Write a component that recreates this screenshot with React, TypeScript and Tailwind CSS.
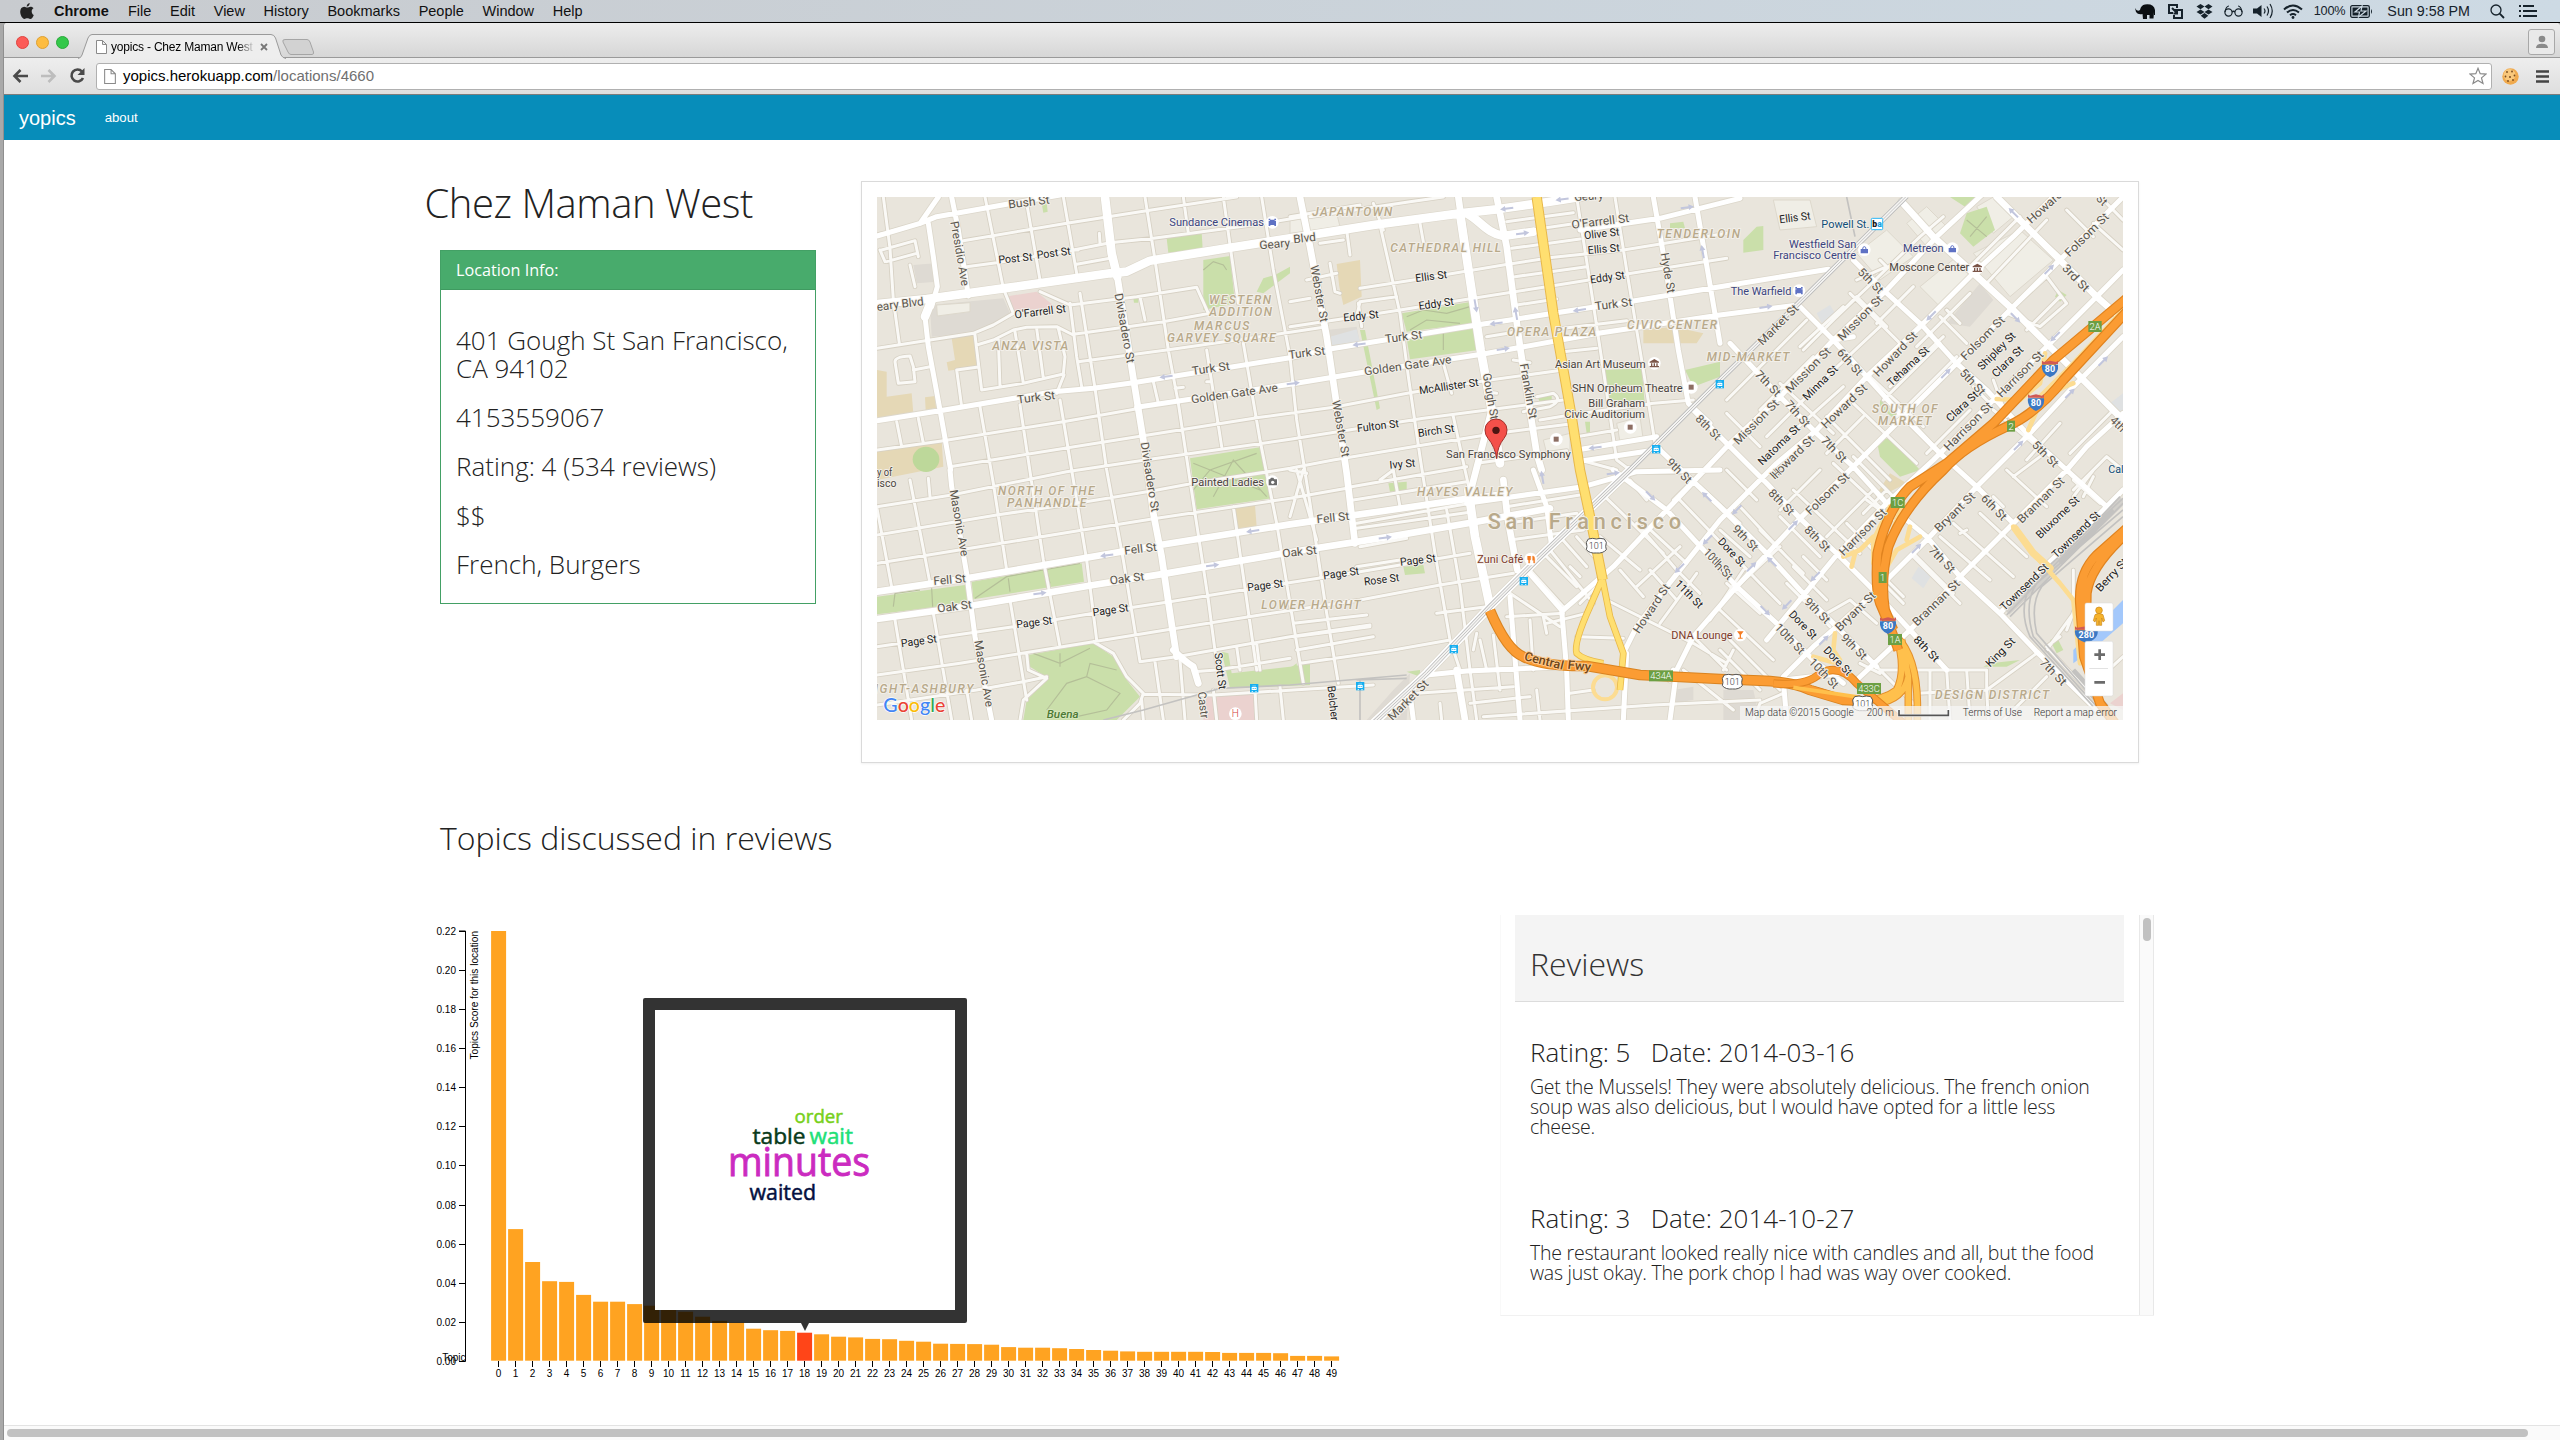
import React from "react";

/* ---------- Map data (units are one third of a pixel) ---------- */

const minorRoads: string[] = [
  // west, east-west streets
  "M310 212L620 160L860 122L1130 81",
  "M51 195L180 160M320 290L410 278L640 240L750 218L880 205L1200 162L1330 140",
  "M650 283L750 265M655 240L640 240M720 220L718 190",
  "M630 405L830 380L1010 352L1045 430",
  "M51 535L340 490L400 465L460 430",
  "M640 493L900 457L1050 430",
  "M655 575L920 540L1290 487L1400 470",
  "M350 525L400 510L460 480L500 472L590 470L640 495",
  "M365 660L490 640L610 612L615 560L595 475M590 670L612 615",
  "M345 495L365 660M415 510L420 650M465 485L490 640M530 475L550 625",
  "M160 600L210 590M290 600L350 592M290 600L305 710",
  "M105 575Q105 560 150 558L160 590L165 635L115 640Z",
  "M65 240L165 212L175 260M80 275L170 250M60 240L75 275",
  "M70 81L90 235L100 390L118 520M150 285L165 350",
  "M51 840L250 812L610 755L840 715",
  "M270 890L850 797L1200 742L1420 712L1650 668L1890 630L2110 600",
  "M51 1010L275 975L620 905L870 868L1290 808L1690 745L2110 690",
  "M51 1095L410 1035L650 1000L880 962L1000 940L1290 895L1420 870L1690 825L1910 790L2130 762",
  "M51 1180L330 1135L650 1083L890 1045L1290 985L1460 955",
  "M51 1430L220 1405L460 1370L700 1330L930 1295L1180 1255L1500 1205L1830 1150",
  "M51 1515L300 1480L700 1415L950 1375L1200 1335L1500 1290L1740 1245L1960 1210",
  "M51 1605L350 1560L490 1535L560 1520M840 1475L950 1460L1290 1400L1530 1365",
  "M1300 1360L1520 1335M1300 1400L1530 1370M1310 1440L1540 1400M1320 1480L1600 1440L1770 1410",
  "M700 1415L760 1450L800 1520L850 1570L840 1600L790 1650M850 1573L1060 1575L1540 1545",
  "M500 1450L505 1500L560 1525L490 1590L480 1650",
  "M1000 1505L1070 1500L1290 1465",
  // west, north-south streets
  "M375 81L430 355L460 430M500 100L540 330M610 81L650 310M660 370L690 560L705 655L740 900L790 1170L840 1475",
  "M630 400L650 560L665 650M540 365L630 405",
  "M855 81L885 270L925 540L955 700L1005 1030L1045 1290L1070 1480M970 81L985 190",
  "M1090 81L1115 260L1135 400M1040 540L1085 830M1120 1010L1190 1500",
  "M1150 520L1200 810L1250 1060L1295 1330L1330 1540",
  "M1205 81L1240 300L1290 560L1310 750L1350 1000L1400 1330L1435 1540",
  "M840 380L855 450M880 635L895 700M945 655L970 652M1040 635L1055 635",
  "M360 710L400 940L440 1200M450 1290L500 1590M480 705L550 1170L600 1430M600 690L680 1170L710 1410",
  "M110 755L125 830M175 745L190 820M50 1010L95 1250M150 930L210 1240M105 1350L155 1650M220 1330L275 1650",
  "M205 925L210 980M320 1560L335 1650M885 1475L910 1650M960 1470L975 1650M1060 1560L1070 1650M1130 1430L1140 1500M1190 1420L1200 1500M1185 1560L1190 1650M1260 1550L1270 1650M845 1590L850 1650",
  // centre
  "M1350 140L1650 95L1750 81M1290 140L1500 105M1560 165L1620 430L1645 620L1680 860L1725 1150L1770 1410L1800 1500",
  "M1340 330L1430 310M1410 280L1425 365L1440 370M1290 395L1350 385",
  "M1500 355L1660 330L1930 285L2080 262L2290 240L2600 190",
  "M1290 470L1490 440L1620 420L1840 385L2060 350L2300 312L2600 265",
  "M1490 440L1500 395L1610 380M1505 470L1495 400",
  "M1380 220L1450 210M1460 180L1470 255M1680 160L1690 215M1570 180L1540 100",
  "M1940 155L2140 128M1945 190L2150 160M1955 235L2160 207M1965 320L2180 290M1970 405L2090 387M1880 500L1990 482M2110 475L2300 452M2110 545L2210 535",
  "M2150 81L2195 370L2230 600L2270 870L2310 900M2265 81L2300 300L2350 600L2385 820",
  "M1750 580L1775 670M1780 740L1815 900L1840 1010M1880 665L1910 670M1960 570L2010 578M1620 1010L1600 900L1560 930",
  "M1290 985L1460 955M1290 900L1340 910M1475 950L1820 890M1480 990L1820 935M1490 1060L1830 1000",
  "M1290 1040L1330 900M1370 1110L1310 900M1490 1075L1840 1025M1500 1130L1640 1105M1490 1190L1620 1170",
  "M1850 880L2120 842M1940 1060L2150 1030M1940 1010L2160 975M1950 1110L2170 1080",
  "M2030 680L2080 670Q2110 690 2070 710L1990 725M2040 750L2130 735L2380 700L2500 690",
  "M2150 800L2270 780M2160 870L2270 900",
  "M1730 1330L1880 1310M1760 1020L1800 1250L1830 1500L1850 1650M1860 1410L1880 1500M1900 1395L1920 1560",
  "M1950 1270L2100 1370M2010 1200L2110 1310M2060 1160L2150 1250M2100 1100L2180 1190M2070 1140L2200 1300M2130 1190L2160 1220M2160 1300L2230 1230M2180 1330L2060 1360M2150 1100L2220 1180",
  "M1940 1340L2110 1330M2010 1350L2020 1500M2050 1340L2060 1390M2150 1400L2290 1405",
  "M1670 1570L1960 1550M1740 1600L1745 1650M1830 1600L2010 1580M1870 1640L2380 1605L2700 1590M2030 1560L2040 1650M1840 1440L1850 1390M2130 1570L2200 1560",
  // south of Market
  "M2240 985L2410 1150M2310 930L2360 990M2220 1100L2340 1200M2240 1290L2500 1420L2600 1480",
  "M2280 1200L2350 1280M2370 1200L2450 1290M2330 1250L2460 1130M2350 1060L2480 1180",
  "M2330 1060L2450 1200L2520 1270M2400 1360L2510 1210M2450 980L2700 1240L2760 1300M2520 950L2640 1060M2600 900L2690 990M2560 870L2440 990",
  "M2500 1400L2600 1500M2580 1320L2740 1470M2470 1500L2620 1620M2550 1350L2650 1200M2600 1240L2700 1330M2760 1560L2610 1410",
  "M2600 690L2720 570L2840 450M2720 800L2900 620L3060 470M2760 820L2950 650M2700 830L2600 730",
  "M2830 540L2990 380L3080 470M2920 450L3180 200L3250 140M2970 370L3120 520M2760 640L2920 790M3050 460L3160 350M2820 530L2950 410M2990 330L3080 290L3060 270",
  "M2900 740L3090 930M2980 700L3170 880M2900 850L3010 740M3070 690L3240 520M3110 740L3290 560M3090 650L3250 500M3270 880L3130 730",
  "M3030 620L3190 770M2860 560L2700 720M3170 530L3330 370M3240 440L3320 520M3260 420L3300 460",
  "M3320 300L3480 140M3380 340L3560 150M3440 430L3560 320L3620 400L3540 470Z M3500 480L3600 380M3490 160L3600 260L3560 310M3620 120L3700 200M3700 160L3789 240M3740 100L3789 150",
  "M3200 850L3330 720M3260 900L3400 770M3400 630L3440 740M3400 720L3520 820M3390 700L3340 650M3630 850L3760 720M3500 870L3600 760M3640 980L3700 900",
  "M2880 900L2760 1020M2920 880L3080 1030M2980 860L3100 980M2800 960L3000 1150M2700 1080L2830 1210M2760 1040L2880 1160",
  "M2900 1100L3040 960M3020 990L3100 1050M3080 960L3010 1030M2800 1190L2900 1290M2830 1160L2900 1230M2960 1060L3080 1180",
  "M2620 1260L2760 1130M2580 1080L2670 1160M2640 1010L2780 1160M2850 1300L2980 1420M2780 1240L2910 1370M3160 1150L3280 1270M3080 1230L3130 1280M2900 1330L2970 1290L3050 1360",
  "M3160 1160L3300 1300M3080 1250L3130 1300M3240 1100L3390 1230M3280 1060L3460 1220M3320 1080L3300 1090M3360 1030L3500 1160M3400 980L3430 1010M3460 920L3540 860M3440 900L3560 1010",
  "M3000 1440L3160 1600M2960 1400L3060 1500M3060 1500L3380 1500L3380 1560L3385 1650M3210 1500L3210 1650M3260 1500L3270 1650M3320 1500L3330 1650M3170 1570L3380 1560M3060 1510L3000 1480",
  "M3640 960L3740 860L3789 900M3670 980L3700 920M3600 1400L3560 1430L3680 1560L3789 1460M3640 1290L3640 1200M3530 1450L3380 1560M3720 1000L3640 930",
  "M3430 1650L3560 1520M3560 1440L3640 1330M3620 1380L3650 1300M2770 1570L2700 1600L2680 1650M2590 1500L2620 1440M2580 1440L2700 1560",
];

const midRoads: string[] = [
  "M51 752L240 722L580 665L700 655L820 638L1290 563L1410 537L1850 465L1970 447L2080 430L2320 393L2580 350L2905 298",
  "M830 712L1290 643L1510 607L1865 553L2215 490L2580 435L2815 405",
  "M275 81L295 180L325 378",
  "M205 160L220 260L232 350L215 410",
  "M51 198L180 160L230 140L440 103L600 75M180 160L235 81",
  "M270 900L275 950L320 1210L345 1400L395 1650M215 400L195 440L205 530L240 720L272 900",
  "M2380 81L2415 280L2455 540L2485 700L2550 760M2505 81L2580 520",
  "M2160 180L2400 145L2580 100L2640 85",
  "M2150 875L2400 838M1820 1000L2170 950L2330 905L2580 900",
  "M2150 840L2390 800M2500 720L2650 870L2720 940L2820 1045L2935 1155L3040 1260L3150 1380L3260 1500",
  "M2400 840L2580 1010L2710 1140L2820 1260L2930 1370L3050 1490",
  "M2260 900L2420 1020L2540 1150L2630 1250L2750 1360L2860 1470L2950 1540",
  "M2610 520L2760 680L2870 790L2980 890L3080 1000L3200 1100L3300 1220L3420 1330L3530 1445L3710 1620",
  "M2815 405L2920 510L3020 620L3120 730L3240 850L3350 950L3460 1060",
  "M2980 270L3070 360L3190 470L3290 580L3380 660L3505 795L3620 900L3740 1010",
  "M2980 500L2920 510L2760 680L2610 820L2420 1020L2260 1190L2110 1320",
  "M3380 61L3230 200L3080 360L2920 510",
  "M2290 1450L2330 1370L2420 1250L2580 1050L2750 880L2870 780L3020 620L3180 470L3340 310L3460 200L3600 60",
  "M2430 1650L2450 1500L2500 1400L2630 1250L2820 1045L2980 890L3110 760L3290 580L3440 430L3600 270L3789 81",
  "M2720 1410L2930 1155L3080 1000L3220 870L3400 690L3560 530L3720 370L3789 300",
  "M2770 1520L2860 1430L2930 1370L3040 1270L3200 1110L3350 950L3505 795L3640 650L3789 500",
  "M2990 1530L3150 1380L3300 1220L3460 1060L3620 900L3680 830L3789 730",
  "M3420 1330L3560 1185L3730 1020L3789 960",
  "M1700 1515L1820 1503L2120 1490M2105 1320L2120 1500L2125 1650M1950 1280L1980 1650M2300 1450L2290 1650M2000 1200L2105 1320",
  "M2430 1530L2440 1500M2770 1530L2780 1650M2770 1530L2950 1510M1650 1570L1660 1650",
  "M2020 900L2060 1010L2075 1130",
];

const wideRoads: string[] = [
  "M735 81L755 250L772 320L820 625L850 810L880 1030L905 1160L930 1330L950 1460",
  "M1320 81L1350 230L1400 500L1422 650L1460 910L1485 1120",
  "M1795 81L1830 330L1862 540L1895 720L1825 990",
  "M1910 81L1940 230L1980 530L2030 850L2045 900M1930 930L1942 1040L1972 1200",
  "M51 1265L320 1225L670 1165L900 1125L1290 1063L1570 1023L1830 985L1940 972",
  "M51 1347L330 1308L700 1245L920 1210L1290 1147L1590 1100L1850 1055L2070 1015",
  "M3410 81L3600 270L3710 380L3789 450",
  "M3125 95L3220 200L3330 300L3460 420L3580 540L3690 650L3789 750",
  "M1790 1500L1815 1650M940 1440Q975 1475 1000 1490L1015 1540",
];

const extraWide: string[] = [
  "M51 402L200 387L430 355L750 310L800 305L870 272L1100 235L1290 205L1540 165L1800 130",
  "M735 81L755 250L772 320",
  "M1800 130L1910 118L2070 95L2180 78M1820 130C1860 150 1880 190 1930 198L2020 185",
  "M1540 1660L1700 1510L1890 1310L2030 1170L2310 900",
  "M1800 130L1830 330L1862 540L1895 720L1920 880",
  "M1825 960L1845 1100L1890 1310M215 390L195 440",
];

const parks = [
  "920 205 1025 188 1028 238 925 248", "1030 270 1110 258 1125 400 1030 420", "545 100 560 98 563 125 550 128",
  "990 865 1200 832 1235 985 1010 1018", "51 1280 315 1245 325 1300 51 1333", "335 1235 665 1180 672 1235 340 1288",
  "1625 430 1835 395 1840 460 1640 485", "1640 505 1845 475 1855 540 1650 568", "2235 600 2345 595 2355 710 2245 720",
  "505 1455 700 1420 760 1460 800 1530 840 1580 770 1650 490 1650 500 1590 565 1525 510 1490", "1085 1445 1105 1450 1115 1510 1290 1490 1350 1480 1350 1545 1110 1555",
  "1290 1495 1310 1480 1315 1545 1290 1545", "1585 940 1640 935 1640 960 1590 965", "1630 1190 1690 1185 1695 1210 1635 1215",
  "1500 480 1515 480 1560 715 1550 720", "2430 160 2470 155 2475 175 2430 175", "3270 81 3360 81 3330 120", "3320 130 3380 110 3405 180 3340 230 3300 190",
  "2650 210 2690 170 2710 168 2710 240 2650 248", "3050 810 3090 805 3180 900 3120 920 3060 860", "2475 600 2580 575 2580 620 2500 650",
  "820 385 835 385 835 398 822 398", "1210 325 1245 315 1290 290 1290 310 1210 370 1190 365", "3060 690 3120 740 3100 745 3060 710",
  "3595 360 3620 375 3600 395 3585 380", "3390 1480 3480 1470 3440 1490 3370 1490", "3570 1410 3590 1400 3610 1440 3590 1450", "2035 685 2075 675 2075 695 2040 700", "2175 755 2190 755 2190 785 2180 790", "1640 1505 1680 1500 1680 1520",
];

const parkPaths = "M345 1285L440 1220L550 1200L660 1180M445 1225L450 1265M560 1200L570 1240M100 1310L105 1270L180 1260M215 1255L218 1310M1000 960L1050 900L1190 850M1000 880L1200 960M1060 980L1120 870L1220 980M520 1450L600 1480L690 1435M600 1490L600 1450M560 1620L620 1540L680 1520L780 1570L740 1620L650 1640M680 1520L690 1480L770 1500M1640 440L1690 420L1760 430L1830 410M1650 480L1700 450L1800 460M1750 490L1750 540M3320 150L3380 200M3330 200L3380 140M1030 300L1060 275L1090 285L1100 300";

interface Label { t: string; x: number; y: number; w: number; r?: number; s?: number; c?: string; k?: "area" | "city" }

const labels: Label[] = [
  { t: "Bush St", x: 508, y: 108, w: 125, r: -7 }, { t: "Presidio Ave", x: 292, y: 252, w: 196, r: 80 },
  { t: "Post St", x: 467, y: 276, w: 102, r: -5, c: "#222" }, { t: "Post St", x: 582, y: 260, w: 102, r: -7, c: "#222" },
  { t: "eary Blvd", x: 122, y: 414, w: 142, r: -7 }, { t: "O'Farrell St", x: 542, y: 436, w: 155, r: -7, c: "#222" },
  { t: "Divisadero St", x: 786, y: 476, w: 212, r: 80 }, { t: "Turk St", x: 530, y: 694, w: 114, r: -7 },
  { t: "Turk St", x: 1054, y: 607, w: 114, r: -8 }, { t: "Golden Gate Ave", x: 1125, y: 682, w: 262, r: -8 },
  { t: "Divisadero St", x: 862, y: 922, w: 212, r: 81 }, { t: "Geary", x: 1245, y: 234, w: 92, r: -5 },
  { t: "Blvd", x: 1335, y: 216, w: 68, r: -6 }, { t: "Turk St", x: 1342, y: 560, w: 110, r: -7 },
  { t: "Webster St", x: 1370, y: 372, w: 172, r: 80 }, { t: "Webster St", x: 1435, y: 777, w: 172, r: 80 },
  { t: "Ellis St", x: 1715, y: 330, w: 96, r: -7, c: "#222" }, { t: "Eddy St", x: 1730, y: 412, w: 106, r: -8, c: "#222" },
  { t: "Eddy St", x: 1504, y: 449, w: 106, r: -6, c: "#222" }, { t: "Turk St", x: 1632, y: 512, w: 112, r: -7 },
  { t: "Golden Gate Ave", x: 1645, y: 598, w: 264, r: -8 }, { t: "McAllister St", x: 1768, y: 660, w: 180, r: -8, c: "#222" },
  { t: "Fulton St", x: 1555, y: 779, w: 126, r: -7, c: "#222" }, { t: "Birch St", x: 1730, y: 793, w: 110, r: -8, c: "#222" },
  { t: "Ivy St", x: 1628, y: 893, w: 78, r: -5, c: "#222" }, { t: "Gough St", x: 1884, y: 680, w: 140, r: 80 },
  { t: "Franklin St", x: 1998, y: 665, w: 168, r: 80 }, { t: "Geary", x: 2187, y: 90, w: 88, r: -4 },
  { t: "O'Farrell St", x: 2222, y: 166, w: 174, r: -7 }, { t: "Olive St", x: 2226, y: 202, w: 106, r: -6, c: "#222" },
  { t: "Ellis St", x: 2232, y: 248, w: 96, r: -5, c: "#222" }, { t: "Eddy St", x: 2244, y: 333, w: 104, r: -8, c: "#222" },
  { t: "Turk St", x: 2262, y: 414, w: 112, r: -7 }, { t: "Hyde St", x: 2416, y: 310, w: 122, r: 80 },
  { t: "Ellis St", x: 2806, y: 154, w: 94, r: -7, c: "#222" }, { t: "8th St", x: 2547, y: 770, w: 90, r: 45 },
  { t: "9th St", x: 2460, y: 900, w: 90, r: 45 },
  { t: "5th St", x: 3034, y: 330, w: 92, r: 45 }, { t: "Market St", x: 2752, y: 462, w: 156, r: -45 },
  { t: "Mission St", x: 2998, y: 442, w: 176, r: -45 }, { t: "Mission St", x: 2842, y: 598, w: 176, r: -45 },
  { t: "Mission St", x: 2686, y: 754, w: 176, r: -45 }, { t: "Minna St", x: 2878, y: 636, w: 134, r: -45, c: "#222" },
  { t: "Howard St", x: 3104, y: 550, w: 172, r: -46 }, { t: "Howard St", x: 2950, y: 706, w: 176, r: -44 },
  { t: "Howard St", x: 2794, y: 860, w: 170, r: -44 }, { t: "Tehama St", x: 3142, y: 586, w: 158, r: -43, c: "#222" },
  { t: "Natoma St", x: 2754, y: 822, w: 160, r: -44, c: "#222" }, { t: "6th St", x: 2972, y: 574, w: 96, r: 48 },
  { t: "7th St", x: 2726, y: 638, w: 94, r: 46 }, { t: "7th St", x: 2815, y: 729, w: 94, r: 48 }, { t: "7th St", x: 2924, y: 836, w: 94, r: 46 },
  { t: "Folsom St", x: 3366, y: 502, w: 170, r: -45 }, { t: "Folsom St", x: 3678, y: 192, w: 170, r: -45 },
  { t: "Shipley St", x: 3407, y: 540, w: 146, r: -45, c: "#222" }, { t: "Clara St", x: 3440, y: 572, w: 118, r: -45, c: "#222" },
  { t: "Clara St", x: 3304, y: 706, w: 118, r: -43, c: "#222" }, { t: "Harrison St", x: 3478, y: 610, w: 182, r: -45 },
  { t: "Harrison St", x: 3322, y: 767, w: 190, r: -45 }, { t: "5th St", x: 3340, y: 634, w: 94, r: 47 },
  { t: "5th St", x: 3558, y: 850, w: 96, r: 45 }, { t: "3rd St", x: 3650, y: 322, w: 100, r: 46 },
  { t: "Howard", x: 3552, y: 108, w: 130, r: -42 }, { t: "St", x: 3728, y: 88, w: 30, r: 45 }, { t: "4th St", x: 3790, y: 774, w: 90, r: 45 },
  { t: "Masonic Ave", x: 290, y: 1060, w: 202, r: 80 }, { t: "Masonic Ave", x: 364, y: 1512, w: 202, r: 80 },
  { t: "Fell St", x: 270, y: 1241, w: 98, r: -5 }, { t: "Fell St", x: 843, y: 1148, w: 98, r: -7 },
  { t: "Oak St", x: 285, y: 1321, w: 104, r: -7 }, { t: "Oak St", x: 802, y: 1237, w: 104, r: -7 },
  { t: "Page St", x: 178, y: 1424, w: 108, r: -8, c: "#222" }, { t: "Page St", x: 524, y: 1368, w: 108, r: -7, c: "#222" },
  { t: "Page St", x: 753, y: 1331, w: 108, r: -8, c: "#222" }, { t: "Page St", x: 1217, y: 1257, w: 108, r: -7, c: "#222" },
  { t: "Page St", x: 1445, y: 1221, w: 108, r: -8, c: "#222" }, { t: "Page St", x: 1675, y: 1181, w: 108, r: -7, c: "#222" },
  { t: "Rose St", x: 1566, y: 1240, w: 106, r: -7, c: "#222" }, { t: "Oak St", x: 1320, y: 1157, w: 104, r: -6 },
  { t: "Fell St", x: 1420, y: 1055, w: 98, r: -6 }, { t: "Scott St", x: 1074, y: 1504, w: 110, r: 83, c: "#222" },
  { t: "Castr", x: 1022, y: 1606, w: 80, r: 83 }, { t: "Belcher", x: 1412, y: 1600, w: 104, r: 84, c: "#222" },
  { t: "Market St", x: 1642, y: 1588, w: 156, r: -45 }, { t: "Howard St", x: 2372, y: 1314, w: 170, r: -56 },
  { t: "10th St", x: 2574, y: 1174, w: 100, r: 45 }, { t: "11th St", x: 2490, y: 1270, w: 104, r: 45, c: "#222" },
  { t: "8th St", x: 2766, y: 994, w: 94, r: 45 }, { t: "8th St", x: 2874, y: 1104, w: 94, r: 45 },
  { t: "9th St", x: 2658, y: 1102, w: 94, r: 45 }, { t: "9th St", x: 2874, y: 1320, w: 94, r: 45 }, { t: "9th St", x: 2984, y: 1428, w: 94, r: 45 },
  { t: "Dore St", x: 2618, y: 1144, w: 104, r: 47, c: "#222" }, { t: "Dore St", x: 2832, y: 1362, w: 104, r: 46, c: "#222" },
  { t: "Dore St", x: 2936, y: 1470, w: 106, r: 46, c: "#222" }, { t: "10th St", x: 2792, y: 1404, w: 112, r: 46 }, { t: "10th St", x: 2894, y: 1508, w: 112, r: 46 },
  { t: "h St", x: 2594, y: 1200, w: 60, r: 45 }, { t: "Folsom St", x: 2900, y: 969, w: 166, r: -44 },
  { t: "Harrison St", x: 3006, y: 1084, w: 184, r: -45 }, { t: "Bryant St", x: 3282, y: 1024, w: 154, r: -44 },
  { t: "Bryant St", x: 2984, y: 1322, w: 154, r: -44 }, { t: "6th St", x: 3404, y: 1010, w: 94, r: 46 },
  { t: "7th St", x: 3248, y: 1166, w: 98, r: 46 }, { t: "7th St", x: 3582, y: 1504, w: 98, r: 46 }, { t: "8th St", x: 3202, y: 1434, w: 94, r: 46, c: "#222" },
  { t: "Brannan St", x: 3540, y: 988, w: 182, r: -44 }, { t: "Brannan St", x: 3226, y: 1296, w: 182, r: -44 },
  { t: "Bluxome St", x: 3590, y: 1039, w: 166, r: -44, c: "#222" }, { t: "Townsend St", x: 3645, y: 1091, w: 186, r: -44, c: "#222" },
  { t: "Townsend St", x: 3490, y: 1248, w: 186, r: -44, c: "#222" }, { t: "King St", x: 3418, y: 1444, w: 110, r: -45, c: "#222" },
  { t: "Berry St", x: 3752, y: 1212, w: 124, r: -47, c: "#222" }, { t: "H", x: 2748, y: 908, w: 22, r: -45 },
  // districts
  { t: "ANZA VISTA", x: 511, y: 540, w: 228, k: "area" }, { t: "WESTERN", x: 1140, y: 402, w: 186, k: "area" },
  { t: "ADDITION", x: 1142, y: 438, w: 188, k: "area" }, { t: "MARCUS", x: 1085, y: 480, w: 166, k: "area" },
  { t: "GARVEY SQUARE", x: 1084, y: 516, w: 326, k: "area" }, { t: "JAPANTOWN", x: 1477, y: 137, w: 240, k: "area" },
  { t: "CATHEDRAL HILL", x: 1757, y: 247, w: 332, k: "area" }, { t: "OPERA PLAZA", x: 2075, y: 499, w: 268, k: "area" },
  { t: "TENDERLOIN", x: 2515, y: 204, w: 250, k: "area" }, { t: "CIVIC CENTER", x: 2436, y: 477, w: 270, k: "area" },
  { t: "MID-MARKET", x: 2664, y: 572, w: 248, k: "area" }, { t: "SOUTH OF", x: 3134, y: 728, w: 196, k: "area" },
  { t: "MARKET", x: 3134, y: 764, w: 160, k: "area" }, { t: "NORTH OF THE", x: 559, y: 975, w: 290, k: "area" },
  { t: "PANHANDLE", x: 560, y: 1011, w: 238, k: "area" }, { t: "LOWER HAIGHT", x: 1353, y: 1317, w: 298, k: "area" },
  { t: "HAYES VALLEY", x: 1814, y: 978, w: 286, k: "area" }, { t: "IGHT-ASHBURY", x: 192, y: 1569, w: 296, k: "area" },
  { t: "DESIGN DISTRICT", x: 3396, y: 1587, w: 342, k: "area" }, { t: "San Francisco", x: 2173, y: 1076, w: 580, k: "city" },
  // places
  { t: "Sundance Cinemas", x: 1070, y: 167, w: 284, c: "#3b4480" }, { t: "Asian Art Museum", x: 2221, y: 593, w: 272, c: "#4a4440" },
  { t: "SHN Orpheum Theatre", x: 2302, y: 665, w: 332, c: "#4a4440" }, { t: "Bill Graham", x: 2270, y: 710, w: 170, c: "#4a4440" },
  { t: "Civic Auditorium", x: 2234, y: 743, w: 242, c: "#4a4440" }, { t: "San Francisco Symphony", x: 1945, y: 864, w: 374, c: "#4a4440" },
  { t: "Powell St.", x: 2956, y: 173, w: 144, c: "#104e78" }, { t: "Westfield San", x: 2888, y: 233, w: 202, c: "#3b4480" },
  { t: "Francisco Centre", x: 2864, y: 266, w: 248, c: "#3b4480" }, { t: "Metreon", x: 3190, y: 245, w: 122, c: "#3b4480" },
  { t: "Moscone Center", x: 3208, y: 302, w: 240, c: "#4a4440" }, { t: "The Warfield", x: 2703, y: 374, w: 182, c: "#3b4480" },
  { t: "Painted Ladies", x: 1103, y: 947, w: 218, c: "#4a4440" }, { t: "Zuni Café", x: 1921, y: 1179, w: 138, c: "#7d3a2c" },
  { t: "DNA Lounge", x: 2526, y: 1408, w: 184, c: "#7d3a2c" }, { t: "y of", x: 74, y: 917, w: 46, c: "#4a4440" }, { t: "isco", x: 80, y: 950, w: 58, c: "#4a4440" },
  { t: "Cal", x: 3768, y: 908, w: 46, c: "#104e78" },
];

const arrows: [number, number, number][] = [
  [918, 620, -8], [1497, 523, -8], [1908, 460, -8], [2158, 420, -8], [1940, 116, -8], [2106, 88, -8], [2205, 833, -8], [740, 1156, -8], [1178, 1083, -8],
  [1988, 190, 172], [2482, 112, 172], [1930, 537, 172], [1300, 640, 172], [2718, 411, 172], [540, 1270, 172], [1058, 1186, 172], [1576, 1103, 172], [2260, 910, 172],
  [1847, 408, 260], [1968, 430, 80], [2528, 245, 80], [2047, 922, 80],
  [3213, 438, -45], [3568, 298, 135], [3460, 128, 45], [3467, 444, 225], [3585, 500, -45], [3258, 610, 135], [3730, 573, 135], [3630, 670, 135], [3476, 826, 135],
  [2630, 1020, -45], [2800, 1065, 135], [2675, 1190, 135], [2735, 1175, 45], [2865, 1220, -45], [2780, 1305, -45], [2716, 1322, 225], [3170, 1135, 135], [2892, 1410, 135],
  [2372, 978, 225], [2540, 980, 45], [2542, 1110, -45], [2458, 1195, -45],
];

const transit: [number, number][] = [[2388, 837], [2579, 642], [1991, 1233], [1781, 1437], [1500, 1548], [1182, 1554]];
const dots: [number, number][] = [[2089, 808], [2311, 772], [2494, 652]];

const exits: [string, number, number, number][] = [["2A", 3705, 470, 40], ["2", 3453, 769, 24], ["1C", 3113, 998, 42], ["1", 3068, 1223, 24], ["1A", 3105, 1409, 42], ["434A", 2403, 1518, 72], ["433C", 3027, 1556, 72]];
const interstates: [string, number, number, number][] = [["80", 3570, 596, 24], ["80", 3528, 697, 24], ["80", 3084, 1366, 24], ["280", 3679, 1393, 34]];
const usRoutes: [number, number][] = [[2209, 1127], [2617, 1535], [3008, 1600]];

function MapView() {
  const stroke = (d: string[], color: string, w: number) => (
    <path d={d.join("")} fill="none" stroke={color} strokeWidth={w} strokeLinecap="round" strokeLinejoin="round" />
  );
  return (
    <svg viewBox="51 81 3738 1569" className="block h-[523px] w-[1246px]" fontFamily="Roboto, sans-serif">
      <rect x="51" y="81" width="3738" height="1569" fill="#e9e5dc" />
      <g fill="#dedad3">
        <path d="M210 405L430 385L455 440L340 490L215 500ZM160 285L225 280L230 335L170 340ZM3260 460L3360 340L3400 390L3330 470ZM1400 480L1490 470L1500 520L1410 530ZM1600 1560L1650 1510L1640 1650L1520 1650ZM2590 1560L2680 1560L2700 1650L2590 1650ZM2440 1560L2500 1550L2500 1590L2440 1600Z" />
        <path fill="#dfe1e2" d="M1410 500L1490 478L1500 515L1415 525ZM2870 430L2910 405L2925 430L2885 460ZM3175 1190L3215 1215L3190 1255L3155 1225ZM3750 700L3789 670V740Z" />
      </g>
      <g fill="#e5d8b6">
        <path d="M275 505L340 495L350 590L265 602L260 577L285 570ZM51 600L80 605L80 680L155 670L160 730L80 745L51 740ZM195 682L225 678L228 715L197 720ZM51 840L245 810L250 890L51 930ZM1430 282L1500 270L1505 380L1450 405L1438 350ZM2350 480L2440 470L2530 490L2510 520L2350 520ZM3045 980L3090 910L3140 940L3080 970ZM1125 1010L1185 1005L1190 1070L1130 1075ZM3190 190L3210 195L3195 215Z" />
      </g>
      <g fill="#ebd2cf">
        <path d="M435 380L530 365L585 410L460 425ZM1040 1575L1185 1570L1190 1650L1030 1650ZM3750 1600L3789 1570V1620Z" />
      </g>
      <g fill="#f0eee6" stroke="#ddd8cc" strokeWidth="3">
        <path d="M230 405L330 398L330 425L232 438ZM3340 250L3480 180L3580 270L3450 380ZM3140 160L3200 110L3260 170L3200 230ZM3180 350L3290 260L3330 320L3240 410ZM2740 90H2850L2870 170L2760 180ZM2990 250L3080 180L3160 260L3060 330ZM2050 810L2130 790V850H2060ZM2270 760L2340 740L2350 810L2280 815ZM1290 145L1430 130L1440 170L1290 190ZM3350 110L3400 81L3460 140L3400 190Z" />
      </g>
      <g fill="#cadfaa">{parks.map((p) => <polygon key={p} points={p} />)}</g>
      <ellipse cx="198" cy="868" rx="40" ry="38" fill="#bdd89a" />
      <path d={parkPaths} fill="none" stroke="#b4bf98" strokeWidth="3.5" />
      <path d="M3640 1440L3789 1290V1360L3720 1420L3640 1480Z" fill="#a3c8fb" />

      {stroke(minorRoads, "#d6d0c3", 14)}
      {stroke(midRoads, "#dcd7cb", 20)}
      {stroke(wideRoads, "#dcd7cb", 25)}
      {stroke(extraWide, "#dcd7cb", 30)}
      {stroke(minorRoads, "#faf9f6", 9)}
      {stroke(midRoads, "#ffffff", 15)}
      {stroke(wideRoads, "#ffffff", 20)}
      {stroke(extraWide, "#ffffff", 26)}

      <path d="M1540 1660L1700 1510L1890 1310L2030 1170L2310 900L2580 630L2810 405L3140 78" fill="none" stroke="#bbb" strokeWidth="16" />
      <path d="M1540 1660L1700 1510L1890 1310L2030 1170L2310 900L2580 630L2810 405L3140 78" fill="none" stroke="#f6f5f3" strokeWidth="11" />
      <path d="M1540 1660L1700 1510L1890 1310L2030 1170L2310 900L2580 630L2810 405L3140 78" fill="none" stroke="#c4c4c4" strokeWidth="3" />
      <g fill="none" stroke="#c3c2c0" strokeWidth="5">
        <path d="M730 1650L850 1620L1010 1575L1080 1555L1290 1545L1640 1515M1500 1530L1500 1650M1490 1530L1640 1525M3780 980L3440 1335M3789 1000L3450 1340M3789 1020L3530 1240Q3490 1300 3520 1400L3710 1610M3789 1040L3545 1250Q3510 1300 3530 1390L3720 1610M3789 985L3520 1230Q3470 1310 3510 1400L3700 1610M2960 81L2985 200" />
        <path d="M3760 1020L3600 1180M3640 1500L3740 1610" strokeWidth="14" />
        <path d="M3789 990L3610 1165L3440 1325" strokeWidth="24" strokeOpacity=".6" />
      </g>

      {/* ramps and yellow routes */}
      <g fill="none" stroke="#fcdc92" strokeWidth="14" strokeLinecap="round" strokeLinejoin="round">
        <path d="M3410 687L3480 690L3540 640L3555 550M3789 420L3640 580L3520 700M3640 640Q3580 660 3540 700L3505 780M3460 1070L3520 1150L3600 1240L3640 1290L3660 1480M3090 1010L3040 1110L3040 1180M2950 1160L3000 1140L3040 1100M2975 1190L2985 1150M3180 1100L3110 1140L3075 1200M3150 1070L3140 1110M2925 1390L2920 1440L2940 1470M2860 1460L2930 1480M3130 1000L3070 1150" />
        <circle cx="2235" cy="1552" r="36" strokeWidth="12" />
        <path d="M3465 1075L3520 1150L3570 1195" strokeWidth="22" />
      </g>
      <g fill="none" strokeLinecap="butt" strokeLinejoin="round">
        <path d="M2030 81L2080 430L2135 740L2160 900L2190 1040L2228 1230" stroke="#e8b84a" strokeWidth="31" />
        <path d="M2030 81L2080 430L2135 740L2160 900L2190 1040L2228 1230" stroke="#ffdf70" strokeWidth="25" />
        <path d="M2225 1230L2190 1310Q2140 1420 2150 1450Q2170 1470 2230 1480M2228 1230L2250 1340L2290 1450L2280 1560" stroke="#e8b84a" strokeWidth="20" />
        <path d="M2225 1230L2190 1310Q2140 1420 2150 1450Q2170 1470 2230 1480M2228 1230L2250 1340L2290 1450L2280 1560" stroke="#ffdf70" strokeWidth="15" />
      </g>
      {/* freeways */}
      <g fill="none" strokeLinejoin="round" strokeLinecap="butt">
        {[["#e4902c", 23], ["#ffc04c", 17]].map(([c, w]) => (
          <path key={c} stroke={c} strokeWidth={w} d="M3110 1400Q3140 1500 3110 1560Q3060 1600 2960 1590L2860 1560M3125 1410L3145 1520L3145 1650M3110 1400Q3170 1460 3172 1600L3172 1650M3145 1520Q3130 1590 3050 1600" />
        ))}
        {[["#e0831f", 30], ["#fb9c33", 23]].map(([c, w]) => (
          <path key={c} stroke={c} strokeWidth={w} d="M3800 385L3580 570L3400 760L3260 880L3150 950Q3080 1020 3052 1150Q3045 1260 3060 1300L3090 1370L3115 1440M3800 425L3610 630Q3530 730 3440 770Q3310 830 3250 900Q3130 1010 3085 1130Q3060 1230 3075 1320L3100 1380M3800 1075L3710 1155Q3655 1210 3660 1300L3672 1460L3720 1600L3765 1660M3800 1090Q3690 1190 3680 1270L3678 1400" />
        ))}
        {[["#d98320", 32], ["#fb9c33", 26]].map(([c, w]) => (
          <path key={c} stroke={c} strokeWidth={w} d="M1890 1322Q1940 1440 1990 1460Q2050 1490 2180 1488L2340 1515L2580 1527L2700 1532Q2800 1535 2850 1560L2950 1590L3000 1592" />
        ))}
        {[["#e0831f", 25], ["#fb9c33", 19]].map(([c, w]) => (
          <path key={c} stroke={c} strokeWidth={w} d="M2740 1540Q2840 1550 2880 1510Q2940 1480 2990 1540L3130 1660" />
        ))}
        <path d="M2800 1552L3000 1582" stroke="#ffc04c" strokeWidth="11" />
      </g>

      <g fill="#c2c6dd">
        {arrows.map(([x, y, r], i) => (
          <path key={i} transform={`translate(${x} ${y}) rotate(${r})`} d="M-20 0L-4 -9V-3H20V3H-4V9Z" />
        ))}
      </g>

      {dots.map(([x, y]) => (
        <g key={x}><circle cx={x} cy={y} r="19" fill="#fff" /><rect x={x - 8} y={y - 8} width="15" height="15" fill="#8d6e63" /></g>
      ))}
      {[[1237, 157], [2817, 362], [3013, 239], [3277, 236], [3352, 294], [2383, 580], [1237, 935], [2012, 1167], [2641, 1395], [1126, 1631]].map(([x, y]) => (
        <circle key={`${x}-${y}`} cx={x} cy={y} r="19" fill="#fff" />
      ))}
      {[[1237, 157], [2817, 362]].map(([x, y]) => (
        <path key={x} transform={`translate(${x} ${y})`} fill="#5f72c4" d="M-11 -11h5v3h12v-3h5v22h-5v-3h-12v3h-5ZM-11-6v2h4v-2M7-6v2h4v-2" />
      ))}
      {[[3013, 239], [3277, 236]].map(([x, y]) => (
        <g key={x} transform={`translate(${x} ${y})`}><path d="M-11 -2h22v13h-22z" fill="#5f72c4" /><path d="M-5 -2a5 7 0 0 1 10 0" stroke="#5f72c4" strokeWidth="3" fill="none" /></g>
      ))}
      {[[2383, 580], [3352, 294]].map(([x, y]) => (
        <path key={x} transform={`translate(${x} ${y})`} fill="#7b5548" d="M-14 -5L0 -13L14 -5V-2H-14ZM-10 0h4v8h-4zM-2 0h4v8h-4zM6 0h4v8h-4zM-14 8h28v4h-28z" />
      ))}
      <path d="M1226 928h4l3-5h7l3 5h8v18h-25z" fill="#6b6b6b" /><circle cx="1238" cy="937" r="5" fill="#fff" />
      <path d="M2003 1158v9q0 4 3 4v8h3v-8q3 0 3-4v-9M2018 1158q6 0 6 8v13h-3v-8h-3z" fill="#f57c22" stroke="#f57c22" strokeWidth="1.5" />
      <path d="M2631 1384h20l-8 10v9h5v3h-14v-3h5v-9z" fill="#f57c22" />
      <text x="1126" y="1642" fontSize="30" fill="#d23c3c" textAnchor="middle">H</text>
      <g>
        <rect x="3034" y="145" width="34" height="34" rx="3" fill="#fff" stroke="#29b6f6" strokeWidth="3" />
        <text x="3051" y="171" textAnchor="middle" fontSize="26" fontWeight="900" fill="#111">b<tspan fill="#1ba0dc">a</tspan></text>
      </g>

      {labels.map((l, i) => {
        const area = l.k === "area", city = l.k === "city";
        const r = l.r ?? 0;
        return (
          <text
            key={i}
            transform={`translate(${l.x} ${l.y}) rotate(${r})`}
            dy={Math.abs(r) > 75 ? 4 : Math.abs(r) > 30 ? 15 : 0}
            textAnchor="middle"
            fontSize={city ? 65 : area ? 36 : l.c === "#222" ? 33 : 35}
            fontWeight={area || city ? 500 : 400}
            fontStyle={area ? "italic" : undefined}
            textLength={l.w}
            lengthAdjust={area || city ? "spacing" : "spacingAndGlyphs"}
            fill={area || city ? "#b8a98a" : l.c ?? "#5a554c"}
            stroke="#f3f0ea"
            strokeWidth={6}
            strokeLinejoin="round"
            paintOrder="stroke"
          >
            {l.t}
          </text>
        );
      })}
      <text x="608" y="1643" fontSize="35" fontStyle="italic" fontWeight="500" textAnchor="middle" fill="#4c7a35" stroke="#d8e8bf" strokeWidth="5" paintOrder="stroke">Buena</text>
      <text transform="translate(1991 1470) rotate(14)" fontSize="37" fontWeight="500" textLength="120" lengthAdjust="spacingAndGlyphs" fill="#6d4417" stroke="#fdc98c" strokeWidth="6" paintOrder="stroke">Central</text>
      <text transform="translate(2122 1496) rotate(6)" fontSize="37" fontWeight="500" textLength="70" lengthAdjust="spacingAndGlyphs" fill="#6d4417" stroke="#fdc98c" strokeWidth="6" paintOrder="stroke">Fwy</text>

      {transit.map(([x, y]) => (
        <g key={x} transform={`translate(${x} ${y})`}>
          <rect x="-12" y="-12" width="25" height="25" fill="#16aef0" />
          <path d="M-7 -3h15v9h-15zM-5 -7h11v2h-11zM-7 9h4v2h-4zM4 9h4v2h-4z" fill="#fff" />
          <path d="M-4 0h3v3h-3zM2 0h3v3h-3z" fill="#16aef0" />
        </g>
      ))}
      {exits.map(([t, x, y, w]) => (
        <g key={t}>
          <rect x={x - w / 2} y={y - 17} width={w} height="33" fill="#6c9f43" />
          <text x={x} y={y + 10} fontSize="28" fill="#fff" textAnchor="middle">{t}</text>
        </g>
      ))}
      {interstates.map(([t, x, y, w], i) => (
        <g key={i} transform={`translate(${x} ${y})`}>
          <path d={`M${-w} -12H${w}Q${w + 4} 14 0 26Q${-w - 4} 14 ${-w} -12Z`} fill="#3b78c4" />
          <path d={`M${-w} -24L${-w + 6} -20L0 -24L${w - 6} -20L${w} -24V-14H${-w}Z`} fill="#d05a55" />
          <text y="11" fontSize="27" fontWeight="700" fill="#fff" textAnchor="middle">{t}</text>
        </g>
      ))}
      {usRoutes.map(([x, y]) => (
        <g key={x} transform={`translate(${x} ${y})`}>
          <path d="M-24 -20Q-10 -24 0 -20Q10 -24 24 -20L30 -10Q26 4 30 12Q20 24 0 22Q-20 24 -30 12Q-26 4 -30 -10Z" fill="#fff" stroke="#555" strokeWidth="3" />
          <text y="10" fontSize="27" fill="#333" textAnchor="middle">101</text>
        </g>
      ))}

      {/* pin */}
      <path d="M1910 866Q1905 830 1884 805Q1875 795 1875 780A33 33 0 0 1 1941 780Q1941 795 1932 805Q1912 830 1910 866Z" fill="#f4504a" stroke="#a3302b" strokeWidth="3" />
      <circle cx="1908" cy="781" r="11" fill="#4d1512" />

      <text x="70" y="1626" fontSize="60" fontWeight="500" fontFamily="Lato, Roboto, sans-serif" textLength="186" lengthAdjust="spacingAndGlyphs" stroke="#fff" strokeWidth="4" paintOrder="stroke">
        <tspan fill="#4285f4">G</tspan><tspan fill="#ea4335">o</tspan><tspan fill="#fbbc05">o</tspan><tspan fill="#4285f4">g</tspan><tspan fill="#34a853">l</tspan><tspan fill="#ea4335">e</tspan>
      </text>

      <rect x="2640" y="1608" width="1149" height="42" fill="#f5f5f5" fillOpacity=".75" />
      <g fontSize="32" fill="#333">
        <text x="2655" y="1638" textLength="326" lengthAdjust="spacingAndGlyphs">Map data ©2015 Google</text>
        <text x="3020" y="1638" textLength="82" lengthAdjust="spacingAndGlyphs">200 m</text>
        <text x="3308" y="1638" textLength="178" lengthAdjust="spacingAndGlyphs">Terms of Use</text>
        <text x="3521" y="1638" textLength="250" lengthAdjust="spacingAndGlyphs">Report a map error</text>
      </g>
      <path d="M3117 1618V1636H3265V1618" fill="none" stroke="#fff" strokeWidth="8" />
      <path d="M3117 1620V1636H3265V1620" fill="none" stroke="#555" strokeWidth="5" />

      <g>
        <rect x="3675" y="1299" width="84" height="84" rx="5" fill="#fff" stroke="#d8d8d8" strokeWidth="1.5" />
        <path d="M3705 1334Q3717 1326 3729 1334L3734 1352L3729 1356L3725 1344L3725 1366H3718L3717 1352L3716 1366H3709L3709 1344L3705 1356L3700 1352Z" fill="#f6b32b" stroke="#c98719" strokeWidth="2" />
        <circle cx="3717" cy="1321" r="10" fill="#f6b32b" stroke="#c98719" strokeWidth="2" />
        <rect x="3675" y="1414" width="84" height="164" rx="5" fill="#fff" stroke="#d8d8d8" strokeWidth="1.5" />
        <path d="M3688 1495.500H3744" stroke="#e2e2e2" strokeWidth="3" />
        <path d="M3703 1454H3735M3719 1438V1470M3703 1537H3735" stroke="#6b6b6b" strokeWidth="8" />
      </g>
    </svg>
  );
}

/* ---------- Topic chart ---------- */

const BASE = 1360.7;
const heights = [
  429.7, 131.6, 98.7, 79.5, 78.8, 65.8, 59, 59, 56.6, 55, 51, 49, 44, 39.8, 38, 32, 30.5, 29.8, 28, 26.4, 24, 23.3, 21.8, 21.5, 19.9, 19,
  17, 16.8, 16.6, 16, 13.6, 13, 13, 12.5, 11.7, 10.7, 10, 9.3, 8.9, 8.9, 8.9, 8.9, 8.7, 7.8, 7.8, 7.8, 7.5, 4.8, 4.8, 4.3,
];
const ticks = ["0.00", "0.02", "0.04", "0.06", "0.08", "0.10", "0.12", "0.14", "0.16", "0.18", "0.20", "0.22"];

const cloud: [string, number, number, number, number, string][] = [
  ["order", 794.5, 1122.5, 48.5, 19, "#77d019"],
  ["table", 752.5, 1144, 53, 21.5, "#083a1a"],
  ["wait", 809.5, 1144, 43.5, 21.5, "#1ee077"],
  ["minutes", 728, 1176, 142, 39.5, "#cb2bc0"],
  ["waited", 749.5, 1199.5, 66.5, 21.5, "#04103f"],
];

function TopicChart() {
  return (
    <div className="relative h-[475px] w-[940px]">
      <svg viewBox="420 915 940 475" className="block h-[475px] w-[940px]" fontFamily='"Liberation Sans", sans-serif' fontSize="10">
        {heights.map((h, i) => (
          <g key={i}>
            <rect x={491.1 + i * 17} y={BASE - h} width="15" height={h} fill={i === 18 ? "#ff4518" : "#ffa321"} />
            <path d={`M${498.5 + i * 17} 1361V1367`} stroke="#000" />
            <text x={498.5 + i * 17} y="1377" textAnchor="middle">{i}</text>
          </g>
        ))}
        <path d="M459 931H465.500V1361.500H459" fill="none" stroke="#000" />
        {ticks.map((t, i) => {
          const y = Math.round(BASE - i * 39.05) + 0.5;
          return (
            <g key={t}>
              <path d={`M459 ${y}H465`} stroke="#000" />
              <text x="456" y={y + 3} textAnchor="end">{t}</text>
            </g>
          );
        })}
        <text x="465.500" y="1361" textAnchor="end">Topic</text>
        <text transform="translate(478 931) rotate(-90)" textAnchor="end" textLength="128.500" lengthAdjust="spacingAndGlyphs">Topics Score for this location</text>
      </svg>
      <div className="absolute left-[223px] top-[83px] w-[324px] rounded-[2px] bg-black/80 p-3 pb-[13px]">
        <svg viewBox="655 1010 300 300" className="block h-[300px] w-[300px] bg-white" fontFamily='"Open Sans", sans-serif' fontWeight="500">
          {cloud.map(([t, x, y, w, s, c]) => (
            <text key={t} x={x} y={y} fontSize={s} fill={c} stroke={c} strokeWidth={s > 30 ? 0.9 : 0.5} textLength={w} lengthAdjust="spacingAndGlyphs">{t}</text>
          ))}
        </svg>
        <svg viewBox="0 0 9 9" className="absolute left-[157.500px] top-full h-[8px] w-[8px]"><path d="M0 0H9L4.500 9Z" fill="#333" /></svg>
      </div>
    </div>
  );
}

/* ---------- Desktop menu bar and browser chrome ---------- */

const menus = ["File", "Edit", "View", "History", "Bookmarks", "People", "Window", "Help"];

function MenuBar() {
  return (
    <div className="flex h-[23px] items-center border-b border-black bg-gradient-to-r from-[#c8cbcf] to-[#cddae4] text-[14.500px] leading-[22px] text-[#111]">
      <svg viewBox="0 0 14 16" className="ml-[20px] mr-[20px] h-[16px] w-[14px]" fill="#222">
        <path d="M9.700 0C9.800 1.800 8.400 3.600 6.700 3.700C6.500 2 8 .3 9.700 0ZM11.700 8.400C11.700 6.900 12.500 5.900 13.500 5.300C12.800 4.300 11.800 3.800 10.500 3.800C9.200 3.800 8.100 4.600 7.300 4.600C6.500 4.600 5.400 3.800 4.200 3.800C2 3.900.2 5.700.2 8.700C.2 12 2.500 16 4.400 16C5.400 16 6 15.300 7.300 15.300C8.600 15.300 9 16 10.200 16C11.800 16 13.300 13.500 13.800 11.900C12.400 11.300 11.700 9.900 11.700 8.400Z" />
      </svg>
      <span className="mr-[0.500px] font-bold">Chrome</span>
      {menus.map((m) => <span key={m} className="ml-[18.700px]">{m}</span>)}
      <div className="ml-auto flex items-center text-[#16222b]">
        <svg viewBox="0 0 21 15" className="mr-[12px] h-[15px] w-[21px]" fill="#0b0f12">
          <path d="M0 4Q2 8 5 6Q6 1 10 .5Q19 -.5 20 6V11H19V8L18.500 14.500H14.500V11H12V15H8L7.500 10Q3 11 1 8Z" />
        </svg>
        <svg viewBox="0 0 15 15" className="mr-[13px] h-[15px] w-[15px]" fill="none" stroke="#16222b" strokeWidth="2">
          <path d="M5 9H1V1H9V4M6 6H14V14H6V11M4 4L9 9M9 5.500V9.500H5.500" />
        </svg>
        <svg viewBox="0 0 17 15" className="mr-[11px] h-[15px] w-[17px]" fill="#16222b">
          <path d="M4.500 0L8.500 2.500L4.500 5.200L.5 2.500ZM12.500 0L16.500 2.500L12.500 5.200L8.500 2.500ZM4.500 5.400L8.500 8L4.500 10.600L.5 8ZM12.500 5.400L16.500 8L12.500 10.600L8.500 8ZM8.500 9L12.300 11.800L8.500 14.800L4.700 11.800Z" />
        </svg>
        <svg viewBox="0 0 19 12" className="mr-[10px] h-[12px] w-[19px]" fill="none" stroke="#16222b" strokeWidth="1.200">
          <circle cx="4.500" cy="7.500" r="3.600" /><circle cx="14.500" cy="7.500" r="3.600" /><path d="M1 7Q2 1 5 1M18 7Q17 1 14 1M8 7Q9.500 5.500 11 7" />
        </svg>
        <svg viewBox="0 0 21 16" className="mr-[9px] h-[16px] w-[21px]" fill="none" stroke="#16222b" strokeWidth="1.200">
          <path d="M0 5.500H4L8.500 2V14L4 10.500H0Z" fill="#16222b" stroke="none" />
          <path d="M11 5.500Q13 8 11 10.500M14 3.500Q17 8 14 12.500M17 1Q21.500 8 17 15" />
        </svg>
        <svg viewBox="0 0 20 15" className="mr-[11px] h-[15px] w-[20px]" fill="none" stroke="#16222b" strokeWidth="2">
          <path d="M1 5.500Q10 -2.500 19 5.500M4 8.500Q10 3.500 16 8.500M7 11.200Q10 9 13 11.200" /><circle cx="10" cy="13.500" r="1.400" fill="#16222b" stroke="none" />
        </svg>
        <span className="mr-[5px] text-[12.700px] tracking-[-0.200px]">100%</span>
        <svg viewBox="0 0 23 13" className="mr-[14px] h-[13px] w-[23px]">
          <rect x=".7" y=".7" width="18.600" height="11.600" rx="1.500" fill="none" stroke="#16222b" strokeWidth="1.300" />
          <rect x="2.500" y="2.500" width="15" height="8" fill="#16222b" /><path d="M21 4Q23 6.500 21 9Z" fill="#16222b" />
          <path d="M12 1L5 7H9.500L8.500 12L16 6H11Z" fill="#16222b" stroke="#cddae4" strokeWidth="1.200" />
        </svg>
        <span className="mr-[20px] text-[14.300px]">Sun 9:58 PM</span>
        <svg viewBox="0 0 15 15" className="mr-[14px] h-[15px] w-[15px]" fill="none" stroke="#16222b" strokeWidth="1.300"><circle cx="6" cy="6" r="5" /><path d="M9.700 9.700L14 14" strokeWidth="1.800" /></svg>
        <svg viewBox="0 0 18 12" className="mr-[23px] h-[12px] w-[18px]" stroke="#16222b" strokeWidth="2"><path d="M0 1H2M4 1H15M0 6H2M4 6H18M0 11H2M4 11H18" /></svg>
      </div>
    </div>
  );
}

function PageIcon({ className }: { className: string }) {
  return (
    <svg viewBox="0 0 11 14" className={className} fill="#fff" stroke="#8a8a8a"><path d="M.5 .5H6.500L10.500 4.500V13.500H.5ZM6.500 .5V4.500H10.500" /></svg>
  );
}

function Chrome() {
  return (
    <>
      <div className="relative flex h-[35px] items-start bg-gradient-to-b from-[#ededed] to-[#d6d6d6]">
        <div className="ml-[11.500px] mt-[12.500px] flex gap-[7px]">
          <i className="h-[13px] w-[13px] rounded-full border border-[#e0443e] bg-[#fc5b57]" />
          <i className="h-[13px] w-[13px] rounded-full border border-[#dea032] bg-[#fdbc40]" />
          <i className="h-[13px] w-[13px] rounded-full border border-[#2aa93a] bg-[#34c84a]" />
        </div>
        <div className="absolute inset-x-0 bottom-0 h-px bg-[#9a9a9a]" />
        <div className="absolute left-[74px] top-[11px] h-[24px] w-[238px]">
          <svg viewBox="0 0 238 25" className="absolute left-0 top-0 h-[25px] w-[238px]">
            <path d="M0 24.500Q3 24 4 21L10 4Q11.500 .5 14 .5H193Q196 .5 197.500 4L203 21Q204.500 24 208 24.500" fill="#eeeeee" stroke="#9a9a9a" />
            <path d="M207 5.500H229Q231 5.500 232 8L235.500 18Q236 20.500 234 20.500H213Q211 20.500 210 18L205 8Q204 5.500 207 5.500Z" fill="#d2d2d2" stroke="#a5a5a5" />
          </svg>
          <div className="relative flex h-[24px] items-center pl-[18px] pt-[1px]">
            <PageIcon className="h-[14px] w-[11px]" />
            <span className="ml-[4px] w-[144px] overflow-hidden whitespace-nowrap text-[12px] tracking-[-0.200px] text-black [mask-image:linear-gradient(90deg,#000_88%,transparent)]">yopics - Chez Maman West</span>
            <svg viewBox="0 0 8 8" className="ml-[5px] h-[8px] w-[8px]" stroke="#777" strokeWidth="1.800"><path d="M1 1L7 7M7 1L1 7" /></svg>
          </div>
        </div>
        <div className="ml-auto mr-[5px] mt-[6px] flex h-[26px] w-[27px] items-center justify-center rounded-[3px] border border-[#a8a8a8] bg-[#e9e9e9]">
          <svg viewBox="0 0 14 14" className="h-[14px] w-[14px]" fill="#8a8a8a"><circle cx="7" cy="4" r="3.300" /><path d="M1 13Q1 8.700 7 8.700Q13 8.700 13 13Z" /></svg>
        </div>
      </div>
      <div className="flex h-[37px] items-center border-b border-[#7c7c7c] bg-gradient-to-b from-[#eeeeee] to-[#dedede]">
        <svg viewBox="0 0 75 18" className="ml-[8px] h-[18px] w-[75px]" fill="none" strokeWidth="2.600">
          <path d="M16 9H3M8.500 3L2.500 9L8.500 15" stroke="#4a4a4a" /><path d="M29 9H42M36.500 3L42.500 9L36.500 15" stroke="#bdbdbd" />
          <path d="M70 4.500A6 6 0 1 0 71 11" stroke="#4a4a4a" /><path d="M72.500 1V8H65.500Z" fill="#4a4a4a" />
        </svg>
        <div className="ml-[9px] flex h-[27px] flex-1 items-center rounded-[3px] border border-[#b0b0b0] bg-white pl-[7px] pr-[4px]">
          <PageIcon className="h-[15px] w-[12px]" />
          <span className="ml-[7px] pt-px text-[15px] text-black">yopics.herokuapp.com<span className="text-[#707070]">/locations/4660</span></span>
          <svg viewBox="0 0 18 18" className="ml-auto h-[18px] w-[18px]" fill="none" stroke="#8a8a8a" strokeWidth="1.200"><path d="M9 1.300L11.200 6.700L17 7.100L12.500 10.900L14 16.500L9 13.400L4 16.500L5.500 10.900L1 7.100L6.800 6.700Z" /></svg>
        </div>
        <svg viewBox="0 0 17 17" className="ml-[10px] h-[17px] w-[17px]"><circle cx="8.500" cy="8.500" r="8.200" fill="#f0aa4e" /><circle cx="7.500" cy="7" r="6" fill="#f9c87b" /><g fill="#7a4a1c"><circle cx="5" cy="4" r=".9" /><circle cx="10" cy="3.500" r=".9" /><circle cx="3.500" cy="8.500" r=".9" /><circle cx="8" cy="9" r="1" /><circle cx="12.500" cy="7.500" r=".9" /><circle cx="11" cy="12" r=".9" /><circle cx="6" cy="13" r=".9" /></g></svg>
        <svg viewBox="0 0 13 13" className="ml-[17px] mr-[11px] h-[13px] w-[13px]" stroke="#444" strokeWidth="2.600"><path d="M0 1.500H13M0 6.500H13M0 11.500H13" /></svg>
      </div>
    </>
  );
}

/* ---------- Page ---------- */

const info = ["401 Gough St San Francisco, CA 94102", "4153559067", "Rating: 4 (534 reviews)", "$$", "French, Burgers"];

const reviews = [
  { rating: 5, date: "2014-03-16", lines: ["Get the Mussels! They were absolutely delicious. The french onion", "soup was also delicious, but I would have opted for a little less", "cheese."] },
  { rating: 3, date: "2014-10-27", lines: ["The restaurant looked really nice with candles and all, but the food", "was just okay. The pork chop I had was way over cooked."] },
];

export default function App() {
  return (
    <div className="flex h-[1440px] w-[2560px] flex-col overflow-hidden bg-[#a9a9a9] font-['Liberation_Sans',sans-serif]">
      <MenuBar />
      <div className="ml-[3px] flex flex-1 flex-col overflow-hidden rounded-t-[4px] border-l border-[#8f8f8f] bg-white">
        <Chrome />
        <nav className="flex h-[45px] items-center bg-[#078dba] text-white">
          <span className="ml-[15px] text-[20px]">yopics</span>
          <span className="ml-[29px] pt-px text-[13.200px]">about</span>
        </nav>

        <main className="flex flex-1 flex-col pl-[422px] font-['Open_Sans',sans-serif] font-light text-[#222]">
          <div className="flex h-[675px] pt-[33px]">
            <section className="w-[435px]">
              <h1 className="-ml-[1.500px] whitespace-nowrap text-[40px] leading-[59px] tracking-[-0.450px]">Chez Maman West</h1>
              <div className="ml-[14px] mt-[18px] w-[376px] border border-[#43a065]">
                <div className="h-[39px] border-b border-[#3f9a60] bg-[#48ab6c] pl-[15px] text-[16.200px] font-normal leading-[38px] text-white">Location Info:</div>
                <div className="pb-[25px] pl-[15px] pt-[36px] text-[26px] leading-[28px]">
                  {info.map((t, i) => <p key={t} className={i ? "mt-[21px]" : ""}>{t}</p>)}
                </div>
              </div>
            </section>
            <div className="mt-[8px] h-[582px] w-[1278px] border border-[#dadada] p-[15px] shadow-[0_1px_2px_rgba(0,0,0,0.060)]">
              <MapView />
            </div>
          </div>

          <h2 className="ml-[14px] h-[100px] text-[32px] leading-[45px]">Topics discussed in reviews</h2>

          <div className="flex">
            <div className="-ml-[6px]"><TopicChart /></div>
            <div className="ml-[140px] flex h-[401px] w-[654px] overflow-hidden border-b border-l border-b-[#f1f1f1] border-l-[#f9f9f9]">
              <div className="ml-[14px] w-[609px]">
                <h3 className="h-[87px] border-b border-[#dcdcdc] bg-[#f4f4f4] pl-[15px] pt-[29px] text-[32px] leading-[40px] text-[#333]">Reviews</h3>
                {reviews.map((r, i) => (
                  <article key={r.date} className={i ? "mt-[63px] pl-[15px]" : "mt-[32px] pl-[15px]"}>
                    <p className="whitespace-pre text-[26px] leading-[36px]">{`Rating: ${r.rating}   Date: ${r.date}`}</p>
                    <div className="mt-[7px] whitespace-nowrap text-[19.500px] leading-[20px] tracking-[-0.240px]">{r.lines.map((l) => <p key={l}>{l}</p>)}</div>
                  </article>
                ))}
              </div>
              <div className="ml-auto flex w-[15px] justify-center border-x border-[#e8e8e8] bg-[#fafafa] pt-[3px]">
                <div className="h-[23px] w-[8px] rounded-full bg-[#c1c1c1]" />
              </div>
            </div>
          </div>
        </main>

        <div className="h-[15px] border-t border-[#e3e3e3] bg-[#fafafa] pl-[3px] pt-[3px]">
          <div className="h-[8px] w-[2521px] rounded-full bg-[#c1c1c1]" />
        </div>
      </div>
    </div>
  );
}
